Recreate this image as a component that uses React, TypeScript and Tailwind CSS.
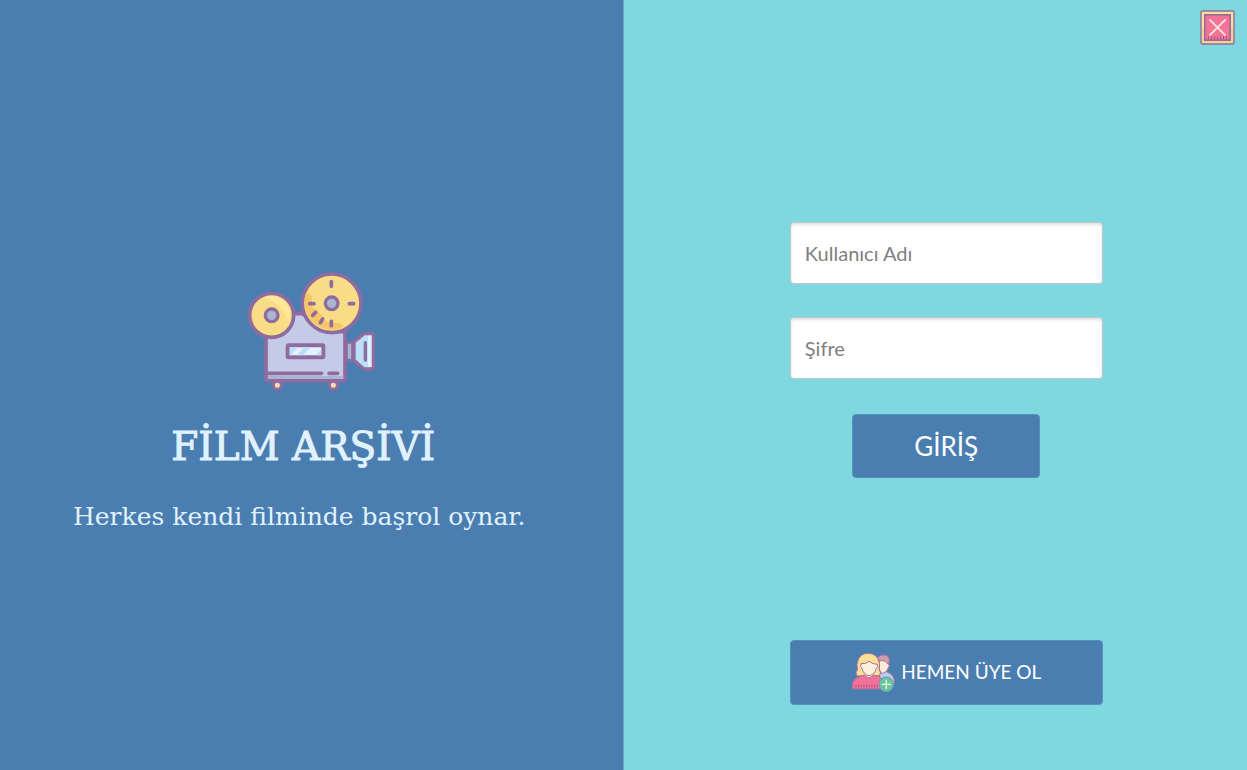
import React from 'react';

function ProjectorIcon() {
  return (
    <svg viewBox="0 0 450 420" className="h-35 w-[150px]" aria-hidden="true">
      <g stroke="#8f6ba0" strokeWidth="11" strokeLinejoin="round" strokeLinecap="round">
        <path d="M90 225L170 158H200L275 212H327V352Q327 359 320 359H97Q90 359 90 352Z" fill="#c3cbe6" />
        <path d="M96 345H322V354H96Z" fill="#a9b6d2" stroke="none" />
        <path d="M332 245H349V297H332Z" fill="#a9b6d2" strokeWidth="7" />
        <path d="M354 243L384 218H412V324H384L354 298Z" fill="#bbdef9" strokeWidth="10" />
        <path d="M396 224H406V318H396Z" fill="#dff0fd" stroke="none" />
        <path d="M388 245V297" strokeWidth="10" />
        <circle cx="124" cy="373" r="12" fill="#fbe3ae" strokeWidth="9" />
        <circle cx="292" cy="373" r="12" fill="#fbe3ae" strokeWidth="9" />
        <path d="M96 337H257M279 337H305" fill="none" />
        <rect x="155" y="253" width="107" height="36" rx="3" fill="#e3f2ff" strokeWidth="12" />
        <path d="M161 259H185L165 283H161ZM204 259H222L202 283H184ZM240 283L256 264V283Z" fill="#bbdef9" stroke="none" />
        <circle cx="107" cy="163" r="66" fill="#f9dc86" />
        <path d="M86 109A57 57 0 0 1 159 184Q139 130 86 109Z" fill="#ffe897" stroke="none" />
        <circle cx="107" cy="163" r="19" fill="#a9b6d2" strokeWidth="10" />
        <circle cx="287" cy="127" r="88" fill="#f9dc86" />
        <path d="M210 97A82 82 0 0 0 322 198Q316 182 296 186Q282 190 266 177Q250 150 232 142Q222 130 229 110Q224 96 210 97Z" fill="#f6c667" stroke="none" />
        <circle cx="287" cy="127" r="19" fill="#a9b6d2" strokeWidth="10" />
        <path d="M286 62V76M286 181V194M221 128H234M340 128H353M230 163L239 154M253 185L260 174" fill="none" />
      </g>
    </svg>
  );
}

function MembersIcon() {
  return (
    <svg viewBox="36 36 132 123" className="h-[41px] w-11 shrink-0" aria-hidden="true">
      <g stroke="#a8719b" strokeWidth="3" strokeLinejoin="round" strokeLinecap="round">
        <path d="M122 101L140 94Q166 103 166 123V130H120Z" fill="#b8cbea" />
        <path d="M121 60H148V73Q154 75 148 83Q145 97 130 101L121 90Z" fill="#faead9" />
        <path d="M116 54Q123 42 141 46Q154 51 150 68L146 72Q142 60 122 62Z" fill="#cf9daa" />
        <path d="M53 107Q48 98 56 87Q51 75 57 61Q64 40 88 40Q114 41 120 65Q123 78 120 87Q128 99 122 107Z" fill="#f9df94" />
        <path d="M40 146V135Q42 117 57 112L75 105Q90 118 105 105L124 112Q134 118 134 146Z" fill="#f0709a" />
        <path d="M79 97H101V106Q90 118 79 106Z" fill="#faead9" stroke="none" />
        <path d="M67 71Q81 73 90 64Q101 73 115 73Q120 81 112 85Q107 105 90 107Q74 105 69 85Q61 80 67 71Z" fill="#fcf0dd" />
        <path d="M49 138H117" fill="none" stroke="#a65487" strokeWidth="7" strokeDasharray="3 5" strokeLinecap="butt" />
        <circle cx="142" cy="133" r="22" fill="#65c6a4" stroke="#7897ab" />
        <path d="M130 133H154M142 121V145" stroke="#fff4d7" strokeWidth="4" />
      </g>
    </svg>
  );
}

function CloseIcon() {
  return (
    <svg viewBox="0 0 35 35" className="size-[35px]" aria-hidden="true">
      <rect x="1" y="1" width="33" height="33" rx="1.5" fill="#f9dfa0" stroke="#8f7197" strokeWidth="1.4" />
      <path d="M2 17H33V33H2Z" fill="#f3c98f" opacity=".65" />
      <rect x="4.8" y="4.8" width="25.4" height="25.4" fill="#f27397" stroke="#8f6b94" strokeWidth="1.5" />
      <path d="M8 28H28" stroke="#a65480" strokeWidth="3" strokeDasharray="1 2" />
      <path d="M10 10L25 25M25 10L10 25" stroke="#fbe0d8" strokeWidth="1.8" strokeLinecap="round" />
    </svg>
  );
}

interface FieldProps {
  name: string;
  type: string;
  label: string;
}

function Field({ name, type, label }: FieldProps) {
  return (
    <input
      name={name}
      type={type}
      placeholder={label}
      aria-label={label}
      className="block h-[62px] w-full rounded border border-[#c2c8c9] bg-white px-3.5 text-[20px] text-[#555] shadow-[inset_0_2px_3px_rgba(0,0,0,0.12)] placeholder:text-[#808080] placeholder:opacity-100"
    />
  );
}

export default function App() {
  return (
    <main className="grid min-h-screen grid-cols-2 bg-[#7fd7df] font-['Lato','Noto_Sans',sans-serif]">
      <section className="flex flex-col items-center justify-center border-r border-[#69a5c6] bg-[#4a7eb0] pt-7 font-['DejaVu_Serif',serif] text-[#e1f2ff]">
        <ProjectorIcon />
        <h1 className="mt-[18px] pr-4 text-[39px] leading-14 [-webkit-text-stroke:1px_#e1f2ff]">FİLM ARŞİVİ</h1>
        <p className="mt-[22px] pr-6 text-[25px] leading-10">Herkes kendi filminde başrol oynar.</p>
      </section>

      <section className="flex flex-col">
        <header className="flex justify-end px-3 pt-2.5">
          <button type="button" aria-label="Kapat" className="block">
            <CloseIcon />
          </button>
        </header>
        <div className="flex grow flex-col items-center pt-[177px] pb-[65px] pl-[22px]">
          <form className="flex w-[52%] flex-col gap-[33px]" onSubmit={(e) => e.preventDefault()}>
            <Field name="username" type="text" label="Kullanıcı Adı" />
            <Field name="password" type="password" label="Şifre" />
            <button type="submit" className="mt-0.5 h-16 w-3/5 self-center rounded border border-[#5790ba] bg-[#4a7eb0] text-[26px] text-white">
              GİRİŞ
            </button>
          </form>
          <button type="button" className="mt-auto flex h-[65px] w-[52%] items-center justify-center gap-1.5 rounded border border-[#5790ba] bg-[#4a7eb0] text-[19px] text-white">
            <MembersIcon />
            HEMEN ÜYE OL
          </button>
        </div>
      </section>
    </main>
  );
}
